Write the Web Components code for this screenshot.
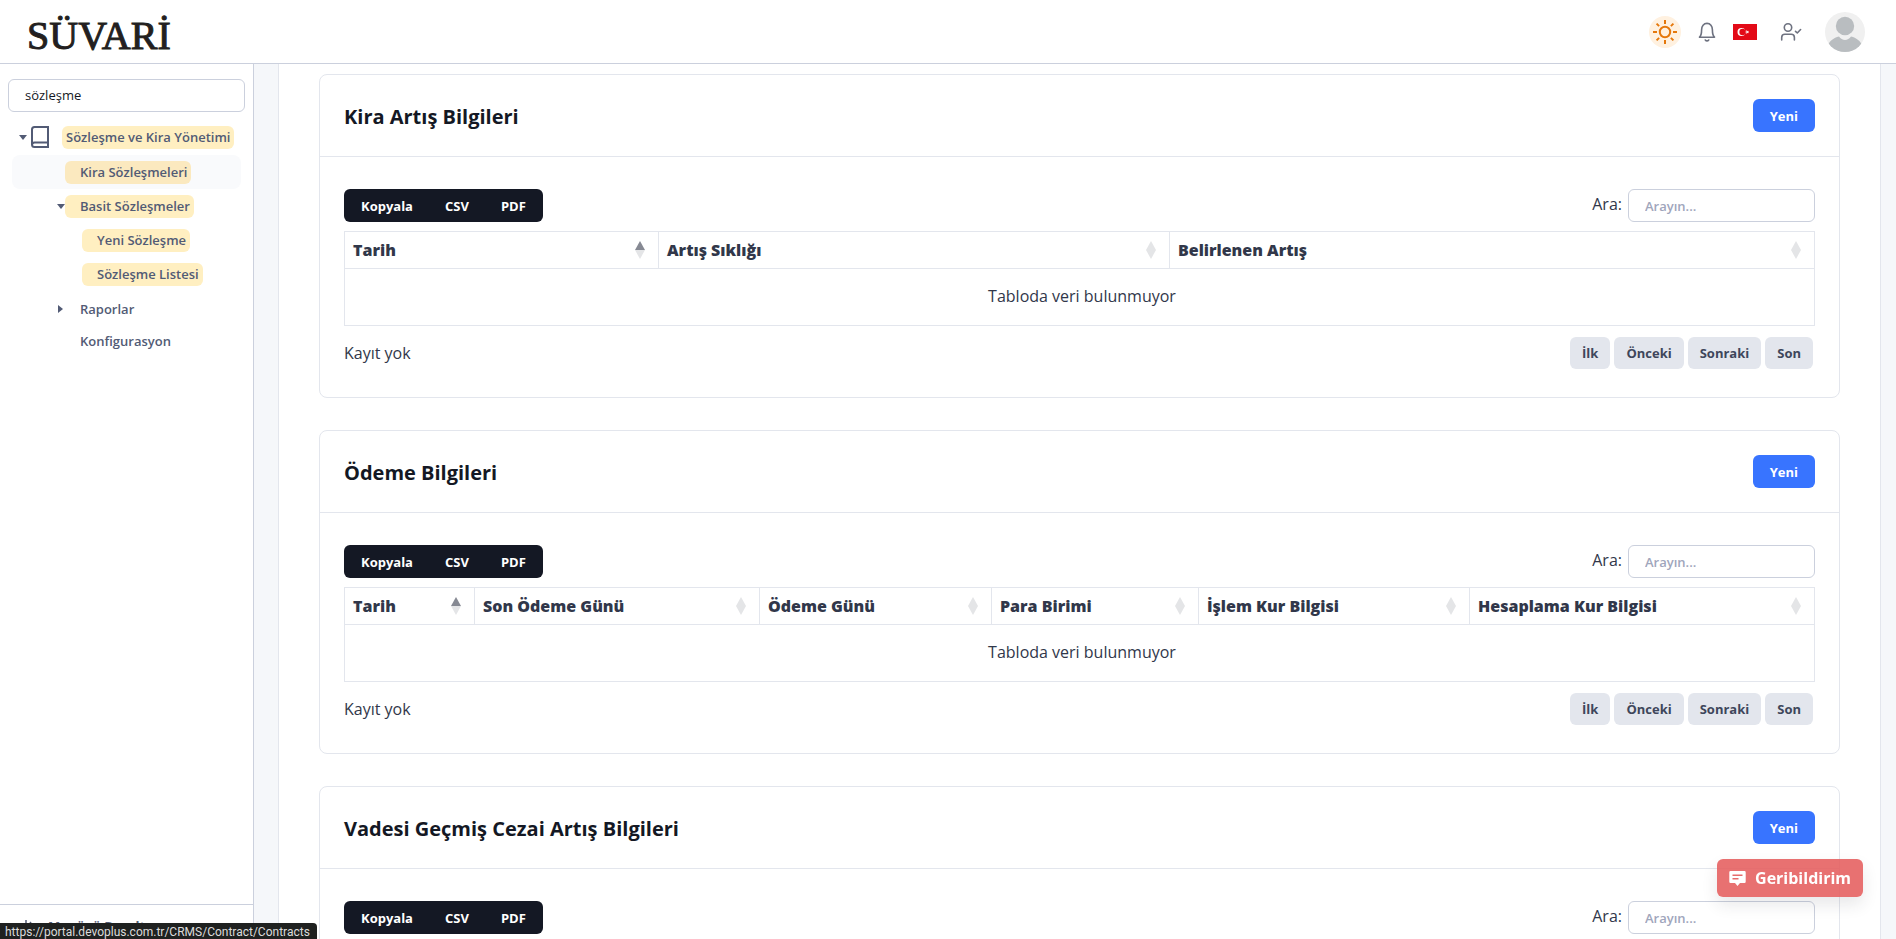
<!DOCTYPE html>
<html lang="tr">
<head>
<meta charset="utf-8">
<meta name="viewport" content="width=device-width, initial-scale=1">
<title>Sözleşme</title>
<style>
  :root {
    --border: #cbd0dd;
    --border-light: #e3e6ed;
    --body-bg: #f5f7fa;
    --text: #31374a;
    --muted: #525b75;
    --primary: #3874ff;
  }

  body {
    margin: 0;
    font-family: "Open Sans", "Noto Sans", sans-serif;
    font-size: 16px;
    line-height: 24px;
    color: var(--text);
    background: var(--body-bg);
  }
</style>
</head>
<body>
<app-shell>
  <top-bar slot="header"></top-bar>
  <side-nav slot="nav"></side-nav>
  <data-card heading="Kira Artış Bilgileri"
    columns='[["Tarih", 314], ["Artış Sıklığı", 511], ["Belirlenen Artış", 645]]'></data-card>
  <data-card heading="Ödeme Bilgileri"
    columns='[["Tarih", 130], ["Son Ödeme Günü", 285], ["Ödeme Günü", 232], ["Para Birimi", 207], ["İşlem Kur Bilgisi", 271], ["Hesaplama Kur Bilgisi", 345]]'></data-card>
  <data-card heading="Vadesi Geçmiş Cezai Artış Bilgileri"></data-card>
  <feedback-button slot="overlay">Geribildirim</feedback-button>
  <link-status slot="overlay">https://portal.devoplus.com.tr/CRMS/Contract/Contracts</link-status>
</app-shell>

<script>
/**
 * Page frame: header on top, navigation on the left, scrolling content
 */
class AppShell extends HTMLElement {
  constructor() {
    super();
    this.attachShadow({ mode: "open" });
    this.shadowRoot.innerHTML = `
      <style>
        :host {
          display: flex;
          flex-direction: column;
          height: 100vh;
          overflow: hidden;
        }

        .row {
          display: flex;
          flex: 1;
          min-height: 0;
        }

        main {
          flex: 1;
          min-width: 0;
          overflow-y: auto;
          scrollbar-width: none;
          padding: 0 15px 0 24px;
        }

        .panel {
          display: flex;
          flex-direction: column;
          gap: 32px;
          padding: 10px 40px 32px;
          background: #fff;
          border: solid var(--border-light);
          border-width: 0 1px;
        }
      </style>
      <slot name="header"></slot>
      <div class="row">
        <slot name="nav"></slot>
        <main><div class="panel"><slot></slot></div></main>
      </div>
      <slot name="overlay"></slot>
    `;
  }
}

/**
 * Header with the logo and the user tools
 */
class TopBar extends HTMLElement {
  constructor() {
    super();
    this.attachShadow({ mode: "open" });
    this.shadowRoot.innerHTML = `
      <style>
        :host {
          display: flex;
          align-items: center;
          justify-content: space-between;
          box-sizing: border-box;
          height: 64px;
          padding: 0 31px 0 27px;
          background: #fff;
          border-bottom: 1px solid var(--border);
        }

        .logo {
          padding-top: 8px;
          font: 40px/48px "Liberation Serif", serif;
          color: #231f20;
          -webkit-text-stroke: 1px #231f20;
          text-decoration: none;
        }

        nav {
          display: flex;
          align-items: center;
          gap: 16px;
        }

        button {
          display: flex;
          padding: 0;
          border: 0;
          background: none;
          color: #6e7280;
          cursor: pointer;
        }

        .theme {
          padding: 4px;
          border-radius: 50%;
          background: #fff1e0;
          color: #e5780b;
        }

        .theme svg {
          stroke-linecap: butt;
        }

        .approve {
          padding: 0 6px;
        }

        svg {
          display: block;
          fill: none;
          stroke: currentColor;
          stroke-linecap: round;
          stroke-linejoin: round;
        }
      </style>
      <a class="logo" href="#">SÜVARİ</a>
      <nav aria-label="Kullanıcı">
        <button class="theme" aria-label="Tema">
          <svg width="24" height="24" viewBox="0 0 24 24" stroke-width="2">
            <circle cx="12" cy="12" r="5.2"/>
            <path d="M12 0v4M12 20v4M0 12h4M20 12h4M3.600 3.600l2.500 2.500M17.900 17.900l2.500 2.500M3.600 20.400l2.500-2.500M17.900 6.100l2.500-2.500"/>
          </svg>
        </button>
        <button aria-label="Bildirimler">
          <svg width="20" height="20" viewBox="0 0 20 20" stroke-width="1.6">
            <path d="M2.500 15.200h15c-1.600-1.300-2.100-2.800-2.100-7.400C15.400 4 13.300 1.400 10 1.400S4.600 4 4.600 7.800c0 4.600-.5 6.100-2.100 7.400z"/>
            <path d="M8.300 18c.9 1.200 2.500 1.200 3.400 0"/>
          </svg>
        </button>
        <button aria-label="Türkçe">
          <svg width="24" height="16" viewBox="0 0 24 16" style="stroke:none">
            <path fill="#e30a17" d="M0 0h24v16H0z"/>
            <circle cx="8.500" cy="8" r="4" fill="#fff"/>
            <circle cx="9.600" cy="8" r="3.200" fill="#e30a17"/>
            <path fill="#fff" d="M12 8l1.500-.5v-1.700l1 1.400 1.600-.5-1 1.300 1 1.300-1.600-.5-1 1.400V8.500z"/>
          </svg>
        </button>
        <button class="approve" aria-label="Onaylar">
          <svg width="24" height="20" viewBox="0 0 24 20" stroke-width="1.600">
            <circle cx="9" cy="5.500" r="3.700"/>
            <path d="M2.700 18v-2.500c0-2 1.400-3.200 3.200-3.200h6.300c1.800 0 3.200 1.200 3.200 3.200V18M16.500 9.300l1.800 1.700 3.300-3.500"/>
          </svg>
        </button>
        <button aria-label="Profil">
          <svg width="40" height="40" viewBox="0 0 40 40" style="stroke:none">
            <clipPath id="round"><circle cx="20" cy="20" r="20"/></clipPath>
            <g clip-path="url(#round)">
              <path fill="#f0f0f0" d="M0 0h40v40H0z"/>
              <circle cx="20" cy="14" r="9.200" fill="#b9bdc0"/>
              <path fill="#b9bdc0" d="M3 33c2-4.500 5.500-7 11-8.500 3 4.500 9 4.500 12 0 5.500 1.500 9 4 11 8.500v9H3z"/>
            </g>
          </svg>
        </button>
      </nav>
    `;
  }
}

/**
 * Sidebar with search box and menu tree
 */
class SideNav extends HTMLElement {
  constructor() {
    super();
    this.attachShadow({ mode: "open" });

    this.items = [
      { label: "Sözleşme ve Kira Yönetimi", level: 0, match: true, caret: "open", icon: true },
      { label: "Kira Sözleşmeleri", level: 1, match: true, hover: true },
      { label: "Basit Sözleşmeler", level: 1, match: true, caret: "open" },
      { label: "Yeni Sözleşme", level: 2, match: true },
      { label: "Sözleşme Listesi", level: 2, match: true },
      { label: "Raporlar", level: 1, caret: "closed" },
      { label: "Konfigurasyon", level: 1 },
    ];
  }

  connectedCallback() {
    this.render();
  }

  renderItem(item) {
    const classes = ["item", `level-${item.level}`];
    if (item.match) classes.push("match");
    if (item.hover) classes.push("hover");

    return `
      <li>
        <a class="${classes.join(" ")}" href="#">
          <span class="caret ${item.caret || ""}"></span>
          ${item.icon ? `
            <svg width="18" height="22" viewBox="0 0 18 22" fill="none" stroke="currentColor" stroke-width="2">
              <path d="M17 16.500V1H3.500Q1 1 1 3.500v15Q1 21 3.500 21H17v-4.500H3.500Q1 16.500 1 19"/>
            </svg>` : ""}
          <span class="label">${item.label}</span>
        </a>
      </li>
    `;
  }

  render() {
    this.shadowRoot.innerHTML = `
      <style>
        :host {
          display: flex;
          flex-direction: column;
          box-sizing: border-box;
          width: 254px;
          flex: none;
          background: #fff;
          border-right: 1px solid var(--border);
          font-size: 13px;
          font-weight: 600;
          line-height: 19px;
          color: var(--muted);
        }

        input {
          box-sizing: border-box;
          width: 100%;
          height: 33px;
          padding: 0 16px 2px;
          border: 1px solid var(--border);
          border-radius: 6px;
          font: inherit;
          font-weight: 500;
          color: #141824;
          outline: 0;
        }

        .search {
          padding: 15px 8px 8px;
        }

        ul {
          flex: 1;
          margin: 0;
          padding: 0 12px;
          list-style: none;
        }

        .item {
          display: flex;
          align-items: center;
          height: 34px;
          border-radius: 8px;
          color: inherit;
          text-decoration: none;
        }

        .level-0 {
          margin-bottom: 1px;
        }

        .item:not(.match) {
          height: 32px;
        }

        /* Plain entries that follow highlighted ones */
        li:has(.match) + li:has(.item:not(.match)) {
          margin-top: 2px;
        }

        .hover {
          background: #f9fafc;
        }

        .caret {
          display: flex;
          justify-content: center;
          width: 9px;
          margin-left: 6px;
        }

        .level-1 .caret {
          margin-left: 44px;
        }

        .level-2 .caret {
          margin-left: 61px;
        }

        .caret.open::before {
          content: "";
          border: 4px solid transparent;
          border-top: 5px solid currentColor;
          border-bottom: 0;
        }

        .caret.closed::before {
          content: "";
          border: 4px solid transparent;
          border-left: 5px solid currentColor;
          border-right: 0;
        }

        svg {
          margin: 0 13px 0 4px;
        }

        .label {
          padding: 2px 4px 2px 15px;
          border-radius: 6px;
          white-space: nowrap;
        }

        .level-0 .label {
          padding-left: 4px;
        }

        .match .label {
          background: #ffefc1;
        }

        .match.hover .label {
          background: #fbe9bf;
        }

        footer {
          height: 34px;
          border-top: 1px solid var(--border);
        }

        .collapse {
          display: flex;
          align-items: center;
          gap: 14px;
          height: 42px;
          padding: 0 24px;
          border: 0;
          background: none;
          font: inherit;
          font-weight: 700;
          color: inherit;
        }

        .collapse svg {
          margin: 0;
        }
      </style>
      <div class="search"><input type="text" aria-label="Menüde ara" value="sözleşme"></div>
      <ul>${this.items.map((item) => this.renderItem(item)).join("")}</ul>
      <footer>
        <button class="collapse">
          <svg width="10" height="12" viewBox="0 0 10 12" fill="none" stroke="currentColor" stroke-width="1.500">
            <path d="M2 0v12M10 6H4M7 2L4 6l3 4"/>
          </svg>
          Menüyü Daralt
        </button>
      </footer>
    `;
  }
}

/**
 * Card with a searchable data table
 */
class DataCard extends HTMLElement {
  constructor() {
    super();
    this.attachShadow({ mode: "open" });
  }

  connectedCallback() {
    this.render();
  }

  renderTable(columns) {
    if (columns.length === 0) return "";
    const total = columns.reduce((sum, [, weight]) => sum + weight, 0);

    return `
      <table>
        <colgroup>
          ${columns.map(([, weight]) => `<col style="width: ${(weight / total) * 100}%">`).join("")}
        </colgroup>
        <thead>
          <tr>
            ${columns
              .map(
                ([label], index) => `
              <th scope="col" class="${index === 0 ? "sorted" : ""}">
                <div class="head">
                  ${label}
                  <svg width="10" height="18" viewBox="0 0 10 18">
                    <path class="up" d="M5 0l5 9H0z"/>
                    <path class="down" d="M0 9h10l-5 9z"/>
                  </svg>
                </div>
              </th>`,
              )
              .join("")}
          </tr>
        </thead>
        <tbody>
          <tr><td colspan="${columns.length}">Tabloda veri bulunmuyor</td></tr>
        </tbody>
      </table>
      <div class="foot">
        <span>Kayıt yok</span>
        <nav aria-label="Sayfalar">
          <button>İlk</button><button>Önceki</button><button>Sonraki</button><button>Son</button>
        </nav>
      </div>
    `;
  }

  render() {
    const columns = JSON.parse(this.getAttribute("columns") || "[]");

    this.shadowRoot.innerHTML = `
      <style>
        :host {
          display: block;
          background: #fff;
          border: 1px solid var(--border-light);
          border-radius: 8px;
        }

        header, .tools, .foot {
          display: flex;
          align-items: center;
          justify-content: space-between;
        }

        header {
          padding: 24px;
          border-bottom: 1px solid var(--border-light);
        }

        h2 {
          margin: 0;
          padding-top: 2px;
          font-size: 20px;
          font-weight: 700;
          line-height: 24px;
          color: #141824;
        }

        button, input {
          box-sizing: border-box;
          height: 33px;
          padding: 0 16px;
          border: 0;
          border-radius: 6px;
          font: inherit;
          font-size: 13px;
          font-weight: 700;
        }

        .new {
          padding: 0 17px;
          background: var(--primary);
          color: #fff;
        }

        .body {
          padding: 32px 24px 28px;
        }

        .export {
          display: flex;
          overflow: hidden;
          padding: 0 1px;
          border-radius: 6px;
          background: #141824;
        }

        .export button {
          border-radius: 0;
          background: none;
          color: #fff;
        }

        label {
          display: flex;
          gap: 6px;
          line-height: 30px;
        }

        input {
          width: 187px;
          border: 1px solid var(--border);
          font-weight: 600;
        }

        input::placeholder {
          color: #9fa6bc;
        }

        table {
          width: 100%;
          margin-top: 9px;
          border-collapse: collapse;
          table-layout: fixed;
        }

        th, td {
          border: 1px solid var(--border-light);
        }

        th {
          padding: 6px 13px 6px 8px;
          font-weight: 800;
          text-align: left;
        }

        .head {
          display: flex;
          align-items: center;
          justify-content: space-between;
          white-space: nowrap;
        }

        .head path {
          fill: #e4e5e7;
        }

        .sorted .up {
          fill: #868993;
        }

        td {
          padding: 15px 8px 17px 13px;
          text-align: center;
        }

        .foot {
          padding: 11px 2px 0 0;
        }

        .foot nav {
          display: flex;
          gap: 4px;
        }

        .foot button {
          height: 32px;
          padding: 0 12px;
          background: var(--border-light);
          color: #3e465b;
        }
      </style>
      <header>
        <h2>${this.getAttribute("heading")}</h2>
        <button class="new">Yeni</button>
      </header>
      <div class="body">
        <div class="tools">
          <div class="export"><button>Kopyala</button><button>CSV</button><button>PDF</button></div>
          <label>Ara: <input type="search" placeholder="Arayın..."></label>
        </div>
        ${this.renderTable(columns)}
      </div>
    `;
  }
}

class FeedbackButton extends HTMLElement {
  constructor() {
    super();
    this.attachShadow({ mode: "open" });
    this.shadowRoot.innerHTML = `
      <style>
        :host {
          position: fixed;
          right: 33px;
          bottom: 42px;
        }

        button {
          display: flex;
          align-items: center;
          gap: 9px;
          height: 38px;
          padding: 0 12px;
          border: 0;
          border-radius: 6px;
          background: rgba(229, 92, 92, 0.87);
          box-shadow: 0 8px 16px rgba(36, 40, 46, 0.1);
          color: #fff;
          font: inherit;
          font-weight: 700;
        }
      </style>
      <button>
        <svg width="17" height="16" viewBox="0 0 17 16">
          <path fill="#fff" d="M1.500 1h14q1.200 0 1.200 1.200v9.600q0 1.200-1.200 1.200H11l-2.500 3L6 13H1.500Q.3 13 .3 11.800V2.200Q.3 1 1.500 1z"/>
          <path fill="none" stroke="#e66b6b" stroke-width="1.600" d="M3.500 5.200h10M3.500 8.700h6"/>
        </svg>
        <slot></slot>
      </button>
    `;
  }
}

// Link address bubble at the bottom left
class LinkStatus extends HTMLElement {
  constructor() {
    super();
    this.attachShadow({ mode: "open" });
    this.shadowRoot.innerHTML = `
      <style>
        :host {
          position: fixed;
          left: 0;
          bottom: 0;
          padding: 2px 7px 0 5px;
          border-top-right-radius: 4px;
          background: #1f2120;
          color: #dcdcdc;
          font-family: Roboto, sans-serif;
          font-size: 12px;
          line-height: 14px;
        }
      </style>
      <slot></slot>
    `;
  }
}

customElements.define("app-shell", AppShell);
customElements.define("top-bar", TopBar);
customElements.define("side-nav", SideNav);
customElements.define("data-card", DataCard);
customElements.define("feedback-button", FeedbackButton);
customElements.define("link-status", LinkStatus);
</script>
</body>
</html>
